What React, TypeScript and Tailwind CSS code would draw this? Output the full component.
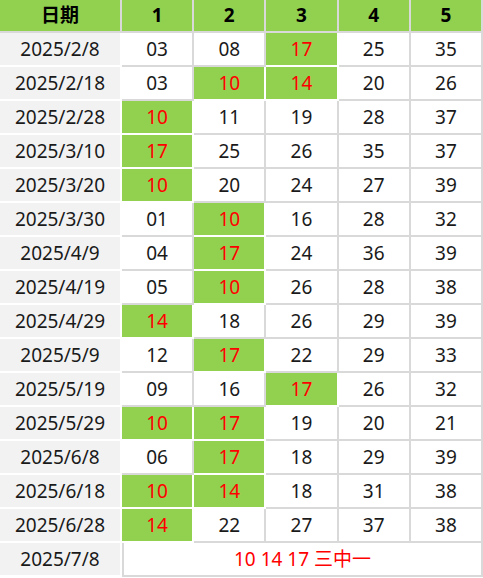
import React from 'react';

type Row = { date: string; nums: string[]; hits: number[] };

// hits = column indexes (0-based) that are highlighted
const rows: Row[] = [
    { date: '2025/2/8', nums: ['03', '08', '17', '25', '35'], hits: [2] },
    { date: '2025/2/18', nums: ['03', '10', '14', '20', '26'], hits: [1, 2] },
    { date: '2025/2/28', nums: ['10', '11', '19', '28', '37'], hits: [0] },
    { date: '2025/3/10', nums: ['17', '25', '26', '35', '37'], hits: [0] },
    { date: '2025/3/20', nums: ['10', '20', '24', '27', '39'], hits: [0] },
    { date: '2025/3/30', nums: ['01', '10', '16', '28', '32'], hits: [1] },
    { date: '2025/4/9', nums: ['04', '17', '24', '36', '39'], hits: [1] },
    { date: '2025/4/19', nums: ['05', '10', '26', '28', '38'], hits: [1] },
    { date: '2025/4/29', nums: ['14', '18', '26', '29', '39'], hits: [0] },
    { date: '2025/5/9', nums: ['12', '17', '22', '29', '33'], hits: [1] },
    { date: '2025/5/19', nums: ['09', '16', '17', '26', '32'], hits: [2] },
    { date: '2025/5/29', nums: ['10', '17', '19', '20', '21'], hits: [0, 1] },
    { date: '2025/6/8', nums: ['06', '17', '18', '29', '39'], hits: [1] },
    { date: '2025/6/18', nums: ['10', '14', '18', '31', '38'], hits: [0, 1] },
    { date: '2025/6/28', nums: ['14', '22', '27', '37', '38'], hits: [0] },
];

const headers = ['日期', '1', '2', '3', '4', '5'];

export default function App() {
    return (
        <div
            className="w-[483px] h-[578px] bg-white text-[19px] text-[#1a1a1a]"
            style={{ fontFamily: '"Noto Sans", "Noto Sans CJK SC", sans-serif' }}
        >
            <div className="grid grid-cols-[122px_repeat(5,1fr)] grid-rows-[33px_repeat(16,34px)]">
                {headers.map(h => (
                    <div
                        key={h}
                        className="flex items-center justify-center bg-[#92d050] font-bold text-black border-r-2 border-b-2 border-[#d9d9d9] last:border-r-0"
                    >
                        {h}
                    </div>
                ))}

                {rows.map(row => (
                    <React.Fragment key={row.date}>
                        <div className="flex items-center justify-center bg-[#f2f2f2] border-r-2 border-b-2 border-white">
                            {row.date}
                        </div>
                        {row.nums.map((n, i) =>
                            row.hits.includes(i) ? (
                                <div
                                    key={i}
                                    className="flex items-center justify-center bg-[#92d050] text-[#ff0000] border-r-2 border-b-2 border-white"
                                >
                                    {n}
                                </div>
                            ) : (
                                <div
                                    key={i}
                                    className="flex items-center justify-center bg-white border-r-2 border-b-2 border-[#d9d9d9]"
                                >
                                    {n}
                                </div>
                            )
                        )}
                    </React.Fragment>
                ))}

                <div className="flex items-center justify-center bg-[#f2f2f2] border-r-2 border-b-2 border-white">
                    2025/7/8
                </div>
                <div className="col-span-5 flex items-center justify-center bg-white text-[#ff0000] border-2 border-t-0 border-[#d9d9d9]">
                    10 14 17 三中一
                </div>
            </div>
        </div>
    );
}
